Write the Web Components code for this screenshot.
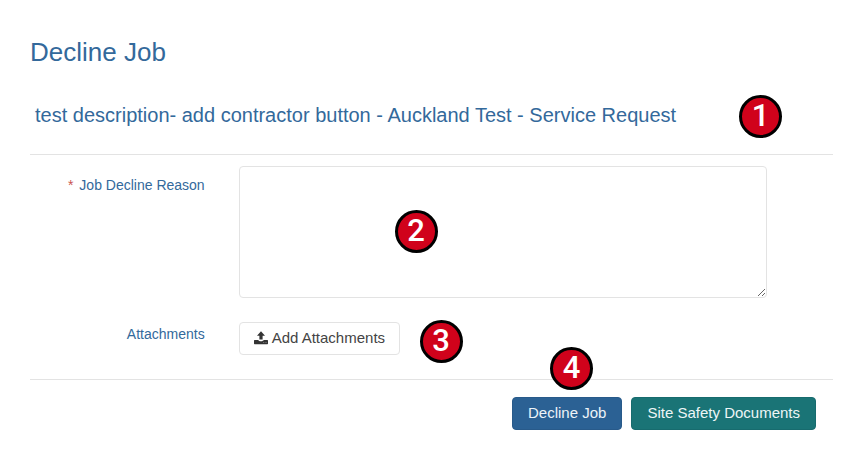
<!DOCTYPE html>
<html lang="en">
<head>
<meta charset="utf-8">
<meta name="viewport" content="width=device-width, initial-scale=1">
<title>Decline Job</title>
<style>
    body {
        margin: 0;
        background: #fff;
        color: #33699b;
        font: 14px/20px "Liberation Sans", Arial, sans-serif;
    }
</style>
</head>
<body>
<decline-job-page></decline-job-page>

<script>
class StepBadge extends HTMLElement {
    constructor() {
        super();
        this.attachShadow({ mode: 'open' });
    }

    connectedCallback() {
        this.shadowRoot.innerHTML = `
            <style>
                :host {
                    position: absolute;
                    z-index: 1;
                    display: block;
                    box-sizing: border-box;
                    width: 43px;
                    height: 43px;
                    border: 3px solid #000;
                    border-radius: 50%;
                    background: #d0021b;
                    color: #fff;
                    font-family: Roboto, sans-serif;
                    font-size: 31px;
                    font-weight: 500;
                    line-height: 36px;
                    text-align: center;
                    pointer-events: none;
                }
            </style>
            <slot></slot>
        `;
    }
}

class ActionButton extends HTMLElement {
    constructor() {
        super();
        this.attachShadow({ mode: 'open' });
    }

    connectedCallback() {
        this.shadowRoot.innerHTML = `
            <style>
                :host {
                    display: inline-flex;
                }
                button {
                    display: inline-flex;
                    align-items: center;
                    gap: 4px;
                    padding: 4px 14px 6px;
                    border: 1px solid #e3e3e3;
                    border-radius: 4px;
                    background: #fff;
                    color: #444;
                    font-family: inherit;
                    font-size: 15px;
                    line-height: 21px;
                    white-space: nowrap;
                    cursor: pointer;
                }
                :host([variant]) button {
                    padding-left: 15px;
                    padding-right: 15px;
                }
                :host([variant="primary"]) button {
                    border-color: #285a8a;
                    background: #2b6194;
                    color: #edf3f8;
                }
                :host([variant="info"]) button {
                    border-color: #176b6e;
                    background: #1a7476;
                    color: #edf6f6;
                }
            </style>
            <button type="button"><slot name="icon"></slot><span><slot></slot></span></button>
        `;
    }
}

class UploadIcon extends HTMLElement {
    constructor() {
        super();
        this.attachShadow({ mode: 'open' });
    }

    connectedCallback() {
        this.shadowRoot.innerHTML = `
            <style>
                :host {
                    display: block;
                    width: 14px;
                    height: 14px;
                }
                svg {
                    display: block;
                }
            </style>
            <svg width="14" height="14" viewBox="0 0 14 14" fill="#333" aria-hidden="true">
                <path d="M7 0.3 L11 4.8 H8.6 V8.4 H5.4 V4.8 H3 Z"/>
                <path d="M0.6 9 H4.4 C4.6 9.8 5.2 10.2 6 10.2 H8 C8.8 10.2 9.4 9.8 9.6 9 H13.4 Q14 9 14 9.6 V12.6 Q14 13.2 13.4 13.2 H0.6 Q0 13.2 0 12.6 V9.6 Q0 9 0.6 9 Z"/>
                <path d="M9.4 11.4 H10.2 V12 H9.4 Z M11.6 11.4 H12.4 V12 H11.6 Z" fill="#fff"/>
            </svg>
        `;
    }
}

class FormRow extends HTMLElement {
    constructor() {
        super();
        this.attachShadow({ mode: 'open' });
    }

    connectedCallback() {
        this.shadowRoot.innerHTML = `
            <style>
                :host {
                    display: grid;
                    grid-template-columns: 22% 1fr;
                    column-gap: 32px;
                    align-items: start;
                }
                .label {
                    padding: 9px 2px 0 0;
                    text-align: right;
                }
                :host([compact]) .label {
                    padding-top: 2px;
                }
                .field {
                    position: relative;
                    min-width: 0;
                    padding-right: 66px;
                }
            </style>
            <div class="label"><slot name="label"></slot></div>
            <div class="field"><slot></slot></div>
        `;
    }
}

class DeclineJobPage extends HTMLElement {
    constructor() {
        super();
        this.attachShadow({ mode: 'open' });
    }

    connectedCallback() {
        this.shadowRoot.innerHTML = `
            <style>
                :host {
                    display: block;
                    padding: 36px 30px 30px;
                }
                h1, h2 {
                    margin: 0;
                    font-weight: normal;
                }
                h1 {
                    font-size: 26px;
                    line-height: 32px;
                }
                header {
                    position: relative;
                    margin-top: 32px;
                    padding: 3px 5px 27px;
                    border-bottom: 1px solid #e3e3e3;
                }
                h2 {
                    font-size: 20px;
                    line-height: 24px;
                }
                form {
                    display: grid;
                    row-gap: 24px;
                    padding: 11px 0 24px;
                    border-bottom: 1px solid #e3e3e3;
                }
                .required {
                    margin-right: 2px;
                    color: #c9544f;
                }
                textarea {
                    display: block;
                    box-sizing: border-box;
                    width: 100%;
                    height: 132px;
                    padding: 6px 12px;
                    border: 1px solid #e3e3e3;
                    border-radius: 4px;
                    outline: none;
                    background: #fff;
                    color: #444;
                    font: inherit;
                    resize: vertical;
                }
                footer {
                    position: relative;
                    display: flex;
                    flex-wrap: wrap;
                    justify-content: flex-end;
                    gap: 9px;
                    padding: 17px 17px 0 0;
                }
                .title-badge {
                    top: -5px;
                    right: 51px;
                }
                .reason-badge {
                    top: 44px;
                    left: 156px;
                }
                .attach-badge {
                    top: -2px;
                    left: 181px;
                }
                .decline-badge {
                    top: -33px;
                    right: 240px;
                }
            </style>
            <main>
                <h1>Decline Job</h1>
                <header>
                    <h2>test description- add contractor button - Auckland Test - Service Request</h2>
                    <step-badge class="title-badge">1</step-badge>
                </header>
                <form>
                    <form-row>
                        <label slot="label" for="reason"><span class="required">*</span> Job Decline Reason</label>
                        <textarea id="reason" required></textarea>
                        <step-badge class="reason-badge">2</step-badge>
                    </form-row>
                    <form-row compact>
                        <span slot="label">Attachments</span>
                        <action-button>
                            <upload-icon slot="icon"></upload-icon>Add Attachments
                        </action-button>
                        <step-badge class="attach-badge">3</step-badge>
                    </form-row>
                </form>
                <footer>
                    <action-button variant="primary">Decline Job</action-button>
                    <action-button variant="info">Site Safety Documents</action-button>
                    <step-badge class="decline-badge">4</step-badge>
                </footer>
            </main>
        `;
    }
}

customElements.define('step-badge', StepBadge);
customElements.define('upload-icon', UploadIcon);
customElements.define('action-button', ActionButton);
customElements.define('form-row', FormRow);
customElements.define('decline-job-page', DeclineJobPage);
</script>
</body>
</html>
